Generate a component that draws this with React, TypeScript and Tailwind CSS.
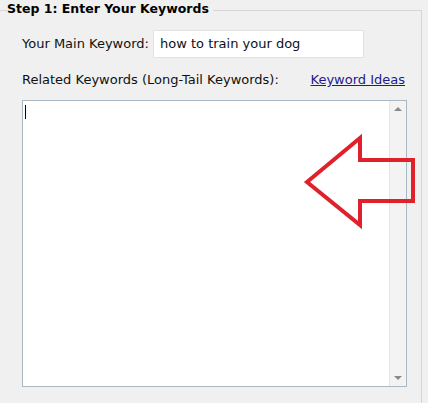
import React from "react";

function ArrowOverlay() {
  return (
    <svg
      className="absolute left-[300px] top-[132px]"
      width="122"
      height="100"
      viewBox="0 0 122 100"
      fill="none"
    >
      <path
        d="M7 50 L60 6 L60 28 L113 28 L113 69 L60 69 L60 93 Z"
        stroke="#e0212b"
        strokeWidth="4"
        strokeLinejoin="miter"
      />
    </svg>
  );
}

function ScrollTrack() {
  return (
    <div className="flex w-[17px] flex-col items-center justify-between border-l border-[#e4e4e4] bg-[#f3f3f3] py-[6px]">
      <div className="h-0 w-0 border-x-[4px] border-b-[4px] border-x-transparent border-b-[#8a8a8a]" />
      <div className="h-0 w-0 border-x-[4px] border-t-[4px] border-x-transparent border-t-[#8a8a8a]" />
    </div>
  );
}

export default function App() {
  return (
    <div
      className="relative h-[403px] w-[428px] overflow-hidden bg-[#f0f0f0] text-[13px] text-[#111]"
      style={{ fontFamily: "Tahoma, 'DejaVu Sans', sans-serif" }}
    >
      <div className="mt-[10px] h-[420px] w-[422px] border-r border-t border-[#d6d6d6]">
        <div className="-mt-[10px] ml-[7px] w-fit bg-[#f0f0f0] pr-[4px] text-[12.5px] font-bold leading-[16px] text-black">
          Step 1: Enter Your Keywords
        </div>

        <div className="mt-[13px] flex items-center pl-[22px]">
          <span className="w-[131px]">Your Main Keyword:</span>
          <div className="flex h-[28px] w-[211px] items-center border border-[#e2e2e2] bg-white pl-[6px]">
            how to train your dog
          </div>
        </div>

        <div className="mt-[14px] flex items-center justify-between pl-[22px] pr-[16px] leading-[16px]">
          <span>Related Keywords (Long-Tail Keywords):</span>
          <a href="#" className="text-[#1c1c8a] underline">
            Keyword Ideas
          </a>
        </div>

        <div className="ml-[22px] mt-[12px] flex h-[287px] w-[385px] border border-[#a9b8c2] bg-white">
          <div className="flex-1 pl-[2px] pt-[4px]">
            <div className="h-[14px] w-px bg-black" />
          </div>
          <ScrollTrack />
        </div>
      </div>
      <ArrowOverlay />
    </div>
  );
}
